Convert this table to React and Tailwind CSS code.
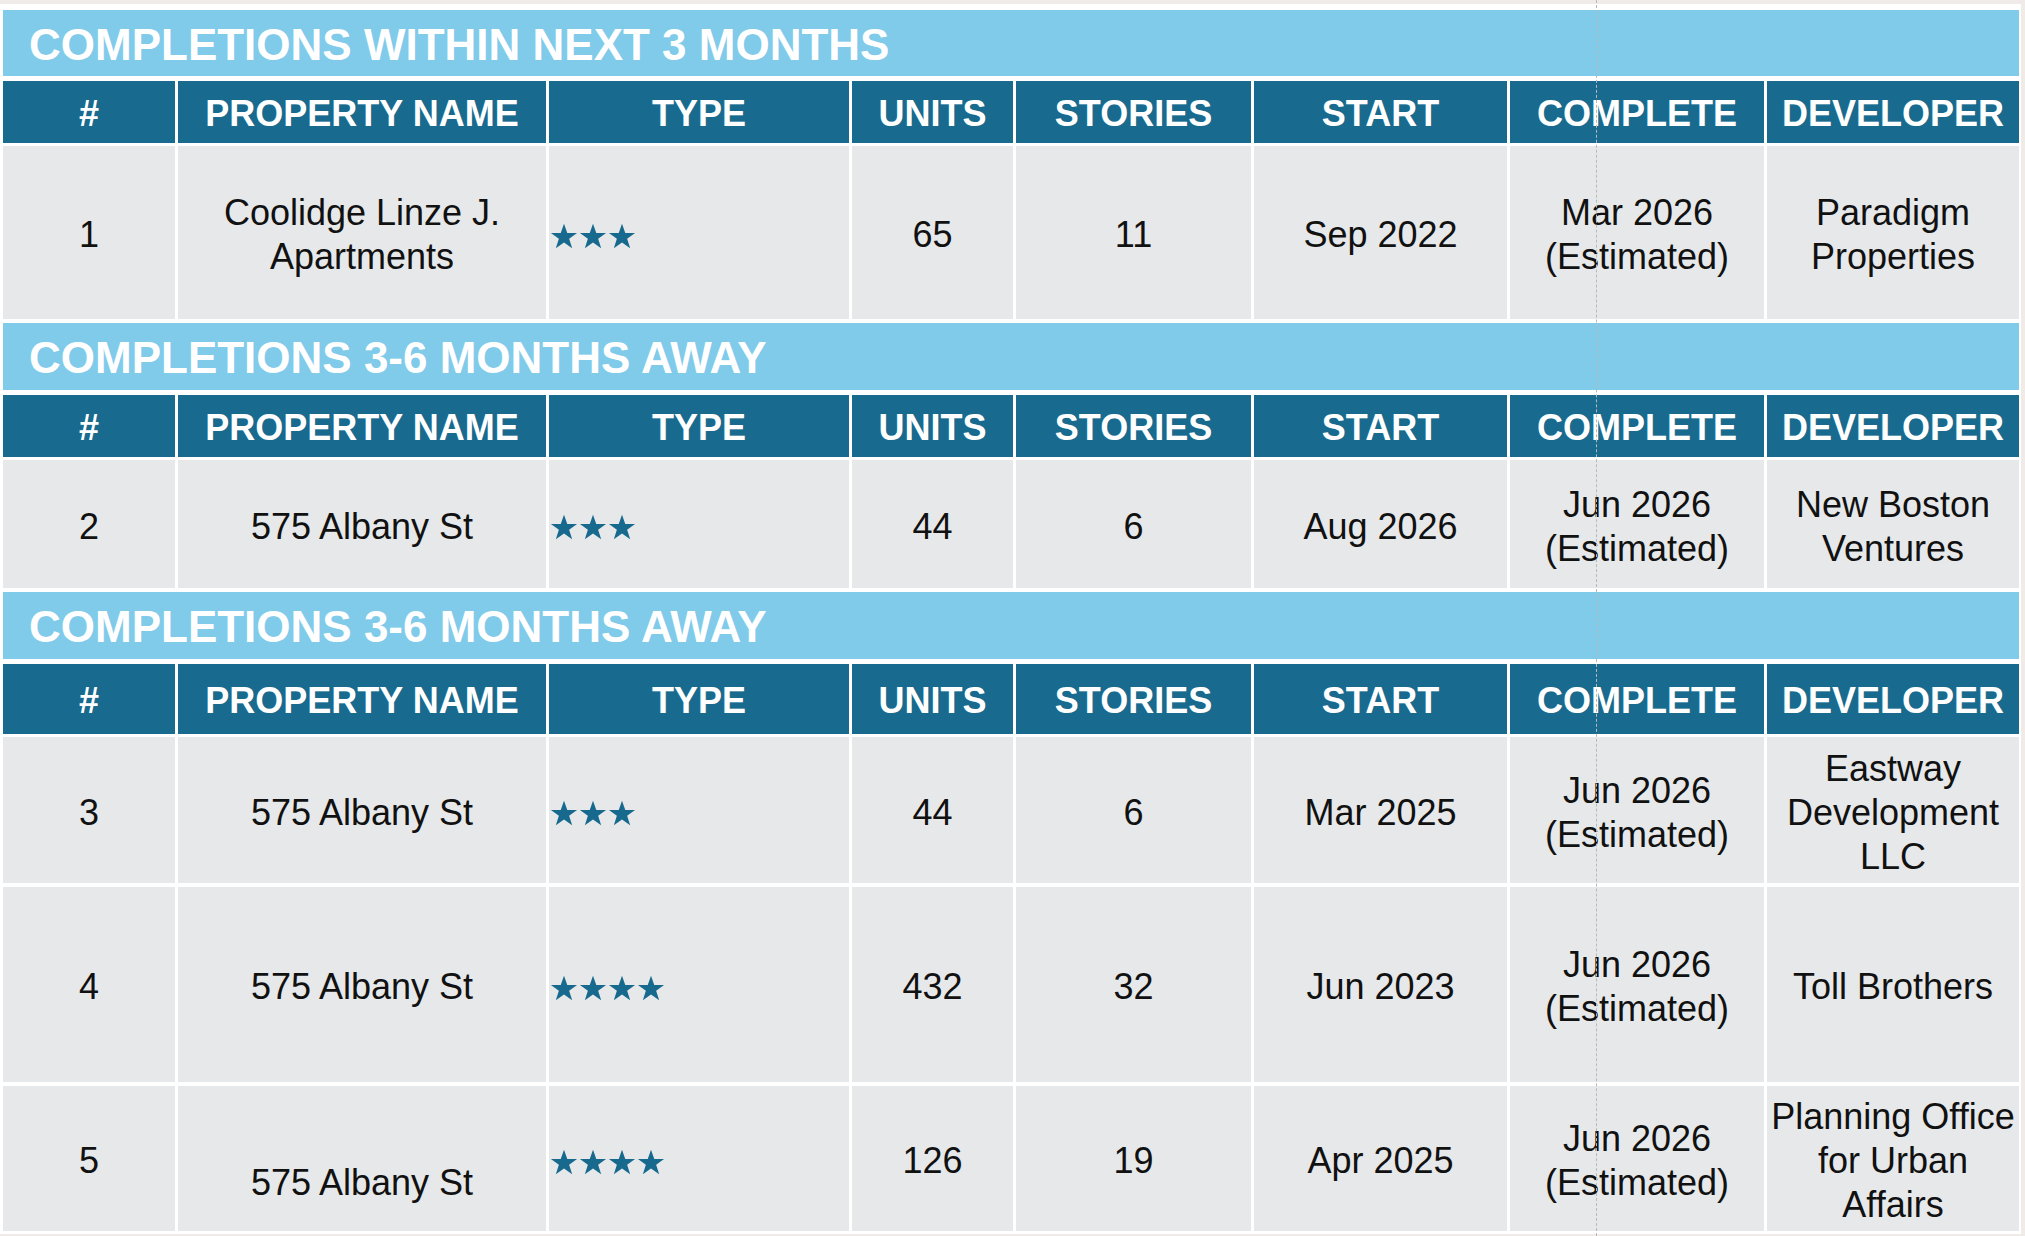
import React from 'react';

const COLS = ['#', 'PROPERTY NAME', 'TYPE', 'UNITS', 'STORIES', 'START', 'COMPLETE', 'DEVELOPER'];

const SECTIONS = [
  {
    title: 'COMPLETIONS WITHIN NEXT 3 MONTHS',
    bannerH: 'h-[66px]',
    headerH: 'h-[62px]',
    rows: [
      { n: '1', name: ['Coolidge Linze J.', 'Apartments'], stars: 3, units: '65', stories: '11', start: 'Sep 2022', complete: 'Mar 2026', dev: ['Paradigm', 'Properties'], h: 'h-[173px]' },
    ],
  },
  {
    title: 'COMPLETIONS 3-6 MONTHS AWAY',
    bannerH: 'h-[67px]',
    headerH: 'h-[62px]',
    rows: [
      { n: '2', name: ['575 Albany St'], stars: 3, units: '44', stories: '6', start: 'Aug 2026', complete: 'Jun 2026', dev: ['New Boston', 'Ventures'], h: 'h-[128px]' },
    ],
  },
  {
    title: 'COMPLETIONS 3-6 MONTHS AWAY',
    bannerH: 'h-[67px]',
    headerH: 'h-[70px]',
    rows: [
      { n: '3', name: ['575 Albany St'], stars: 3, units: '44', stories: '6', start: 'Mar 2025', complete: 'Jun 2026', dev: ['Eastway', 'Development', 'LLC'], h: 'h-[146px]' },
      { n: '4', name: ['575 Albany St'], stars: 4, units: '432', stories: '32', start: 'Jun 2023', complete: 'Jun 2026', dev: ['Toll Brothers'], h: 'h-[195px]' },
      { n: '5', name: ['\u00a0', '575 Albany St'], stars: 4, units: '126', stories: '19', start: 'Apr 2025', complete: 'Jun 2026', dev: ['Planning Office', 'for Urban', 'Affairs'], h: 'h-[145px]' },
    ],
  },
];

const GRID = 'grid grid-cols-[172px_368px_300px_161px_235px_253px_254px_252px] gap-x-[3px]';

const Star = () => (
  <svg width="28" height="27" viewBox="0 0 24 23">
    <path d="M12 0.5l2.8 7.9h8.4l-6.8 5 2.6 8.1L12 16.6l-7 4.9 2.6-8.1-6.8-5h8.4z" fill="#176a8d" />
  </svg>
);

const Lines = ({ lines }) => (
  <div className="text-center">
    {lines.map((l, i) => (
      <div key={i}>{l}</div>
    ))}
  </div>
);

const Cell = ({ children, className = '' }) => (
  <div className={`flex items-center justify-center bg-[#e6e8ea] pt-[5px] ${className}`}>{children}</div>
);

export default function App() {
  return (
    <div className="relative h-[1236px] w-[2025px] overflow-hidden bg-[#f0ebe8]" style={{ fontFamily: '"Liberation Sans", Arial, sans-serif' }}>
      <div className="mt-[4px] flex h-[1230px] w-[2021px] flex-col bg-white pl-[3px] pt-[6px]">
        {SECTIONS.map((sec, si) => (
          <div key={si} className={si < SECTIONS.length - 1 ? 'mb-[4px]' : ''}>
            {/* banner */}
            <div className={`flex w-[2016px] items-center bg-[#80caea] pl-[26px] pt-[3px] text-[44px] font-bold leading-none text-white ${sec.bannerH}`}>
              {sec.title}
            </div>
            {/* column header */}
            <div className={`${GRID} mt-[5px]`}>
              {COLS.map((c) => (
                <div key={c} className={`flex items-center justify-center bg-[#186a8e] pt-[3px] text-[36px] font-bold leading-none text-white ${sec.headerH}`}>
                  {c}
                </div>
              ))}
            </div>
            {/* rows */}
            <div className="mt-[3px] flex flex-col gap-y-[4px]">
              {sec.rows.map((r) => (
                <div key={r.n} className={`${GRID} text-[36px] leading-[44px] text-[#111]`}>
                  <Cell className={r.h}>{r.n}</Cell>
                  <Cell className={r.h}><Lines lines={r.name} /></Cell>
                  <div className={`flex items-center gap-[1px] bg-[#e6e8ea] pl-[1px] pt-[7px] ${r.h}`}>
                    {Array.from({ length: r.stars }).map((_, i) => (
                      <Star key={i} />
                    ))}
                  </div>
                  <Cell className={r.h}>{r.units}</Cell>
                  <Cell className={r.h}>{r.stories}</Cell>
                  <Cell className={r.h}>{r.start}</Cell>
                  <Cell className={r.h}><Lines lines={[r.complete, '(Estimated)']} /></Cell>
                  <Cell className={r.h}><Lines lines={r.dev} /></Cell>
                </div>
              ))}
            </div>
          </div>
        ))}
      </div>
      {/* faint dashed guide line over the sheet */}
      <div className="pointer-events-none absolute left-[1596px] top-0 h-full border-l border-dashed border-[#b9b9b9]" />
    </div>
  );
}
